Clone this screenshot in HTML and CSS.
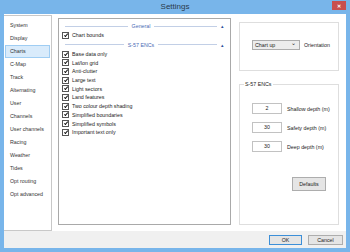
FILE: index.html
```html
<!DOCTYPE html>
<html lang="en">
<head>
    <meta charset="UTF-8">
    <title>Settings</title>
    <link rel="stylesheet" href="styles.css">
</head>
<body>
    <div class="window">
        <div class="titlebar">
            <span class="title">Settings</span>
            <span class="close">&#x2715;</span>
        </div>

        <div class="content">
            <ul class="nav">
                <li>System</li>
                <li>Display</li>
                <li class="selected">Charts</li>
                <li>C-Map</li>
                <li>Track</li>
                <li>Alternating</li>
                <li>User</li>
                <li>Channels</li>
                <li>User channels</li>
                <li>Racing</li>
                <li>Weather</li>
                <li>Tides</li>
                <li>Opt routing</li>
                <li>Opt advanced</li>
            </ul>

            <div class="main-panel">
                <div class="section-head">
                    <span class="line"></span>
                    <span class="head-text">General</span>
                    <span class="line"></span>
                    <span class="collapse">&#x25B4;</span>
                </div>
                <label class="check"><span class="box"></span>Chart bounds</label>

                <div class="section-head">
                    <span class="line"></span>
                    <span class="head-text">S-57 ENCs</span>
                    <span class="line"></span>
                    <span class="collapse">&#x25B4;</span>
                </div>
                <label class="check"><span class="box"></span>Base data only</label>
                <label class="check"><span class="box"></span>Lat/lon grid</label>
                <label class="check"><span class="box"></span>Anti-clutter</label>
                <label class="check"><span class="box"></span>Large text</label>
                <label class="check"><span class="box"></span>Light sectors</label>
                <label class="check"><span class="box"></span>Land features</label>
                <label class="check"><span class="box"></span>Two colour depth shading</label>
                <label class="check"><span class="box"></span>Simplified boundaries</label>
                <label class="check"><span class="box"></span>Simplified symbols</label>
                <label class="check"><span class="box"></span>Important text only</label>
            </div>

            <div class="side">
                <div class="frame orient">
                    <div class="select">Chart up<span class="caret">&#x2304;</span></div>
                    <span class="field-label">Orientation</span>
                </div>

                <div class="frame group">
                    <span class="legend">S-57 ENCs</span>
                    <div class="row">
                        <div class="input">2</div>
                        <span class="field-label">Shallow depth (m)</span>
                    </div>
                    <div class="row">
                        <div class="input">30</div>
                        <span class="field-label">Safety depth (m)</span>
                    </div>
                    <div class="row">
                        <div class="input">30</div>
                        <span class="field-label">Deep depth (m)</span>
                    </div>
                    <div class="btn defaults">Defaults</div>
                </div>
            </div>
        </div>

        <div class="footer">
            <div class="btn ok">OK</div>
            <div class="btn cancel">Cancel</div>
        </div>
    </div>
</body>
</html>
```

FILE: styles.css
```css
body {
    margin: 0;
    font-family: "Liberation Sans", Arial, sans-serif;
    font-size: 5.3px;
    color: #222;
}
.window {
    width: 350px;
    height: 252px;
    box-sizing: border-box;
    background-color: #78b5ea;
    padding: 0 4px 4px 4px;
    display: flex;
    flex-direction: column;
}
.titlebar {
    height: 14px;
    position: relative;
    display: flex;
    justify-content: center;
    align-items: center;
}
.title {
    font-size: 8px;
    color: #2a3a4a;
    margin-top: -1px;
}
.close {
    position: absolute;
    right: 0;
    top: 1px;
    width: 14px;
    height: 9px;
    background-color: #c94f4f;
    color: #fff;
    font-size: 5px;
    font-weight: bold;
    display: flex;
    align-items: center;
    justify-content: center;
}
.content {
    flex: 1;
    background-color: #fff;
    display: flex;
    align-items: flex-start;
}
.nav {
    list-style-type: none;
    margin: 1px 0 0 0;
    padding: 3px 0 0 0;
    width: 48px;
    height: 216px;
    box-sizing: border-box;
    border: 1px solid #c8c8c8;
    border-left: none;
}
.nav li {
    height: 13px;
    line-height: 13px;
    padding-left: 6px;
    color: #333;
}
.nav li.selected {
    background-color: #d9ebfb;
    border: 1px solid #9fcdf3;
    height: 11px;
    line-height: 11px;
    margin: 0 1px;
    padding-left: 4px;
}
.main-panel {
    margin: 4px 0 0 6px;
    width: 173px;
    height: 207px;
    box-sizing: border-box;
    border: 1px solid #a9a9a9;
    padding: 2px 6px 0 3px;
}
.section-head {
    display: flex;
    align-items: center;
    height: 10px;
    padding-left: 3px;
}
.line {
    flex: 1;
    height: 1px;
    background-color: #c2cfe6;
}
.head-text {
    color: #4a6bb5;
    padding: 0 4px;
}
.collapse {
    color: #2f4f9c;
    font-size: 5px;
    margin-left: 4px;
}
.check {
    display: flex;
    align-items: center;
    height: 8.7px;
}
.box {
    width: 5px;
    height: 5px;
    border: 1px solid #555;
    margin-right: 3px;
    position: relative;
    background-color: #fff;
}
.box::after {
    content: "";
    position: absolute;
    left: 1.5px;
    top: 0;
    width: 1.3px;
    height: 3px;
    border: solid #111;
    border-width: 0 1px 1px 0;
    transform: rotate(40deg);
}
.side {
    margin: 8px 0 0 8px;
    width: 100px;
    display: flex;
    flex-direction: column;
}
.frame {
    border: 1px solid #dedede;
    box-sizing: border-box;
}
.orient {
    height: 49px;
    display: flex;
    align-items: center;
    padding-left: 12px;
    padding-bottom: 4px;
}
.select {
    width: 48px;
    height: 10px;
    box-sizing: border-box;
    border: 1px solid #acacac;
    background-color: #ececec;
    display: flex;
    align-items: center;
    justify-content: space-between;
    padding: 0 3px 0 2px;
    margin-right: 4px;
}
.caret {
    font-size: 6px;
    line-height: 6px;
    margin-top: -3px;
}
.group {
    margin-top: 13px;
    height: 141px;
    position: relative;
    padding: 14px 0 0 12px;
}
.legend {
    position: absolute;
    left: 4px;
    top: -4px;
    background-color: #fff;
    padding: 0 1px;
}
.row {
    display: flex;
    align-items: center;
    height: 19px;
}
.input {
    width: 30px;
    height: 11px;
    box-sizing: border-box;
    border: 1px solid #c2c2c2;
    text-align: center;
    line-height: 9px;
    margin-right: 5px;
}
.btn {
    box-sizing: border-box;
    border: 1px solid #adadad;
    background-color: #e5e5e5;
    display: flex;
    align-items: center;
    justify-content: center;
}
.defaults {
    width: 34px;
    height: 14px;
    margin: 21px 0 0 40px;
}
.footer {
    height: 17px;
    background-color: #f0f0f0;
    display: flex;
    justify-content: flex-end;
    align-items: center;
    padding-right: 3px;
    gap: 6px;
}
.ok {
    width: 33px;
    height: 10px;
    border-color: #3c8fd8;
}
.cancel {
    width: 35px;
    height: 10px;
}
```
